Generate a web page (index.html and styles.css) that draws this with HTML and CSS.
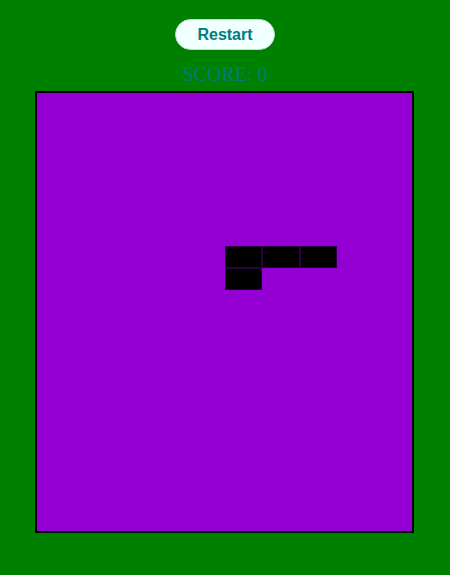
FILE: index.html
```html
<!DOCTYPE html>
<html>
<head>
<meta charset="utf-8">
<link rel="stylesheet" href="styles.css">
</head>
<body>
<div class="page">
  <button class="restart">Restart</button>
  <div class="score">SCORE: 0</div>
  <div class="board">
    <div class="cell c1"></div>
    <div class="cell c2"></div>
    <div class="cell c3"></div>
    <div class="cell c4"></div>
  </div>
</div>
</body>
</html>
```
FILE: styles.css
```css
html, body {
  margin: 0;
  padding: 0;
  background: #008000;
}
.page {
  width: 450px;
  height: 575px;
  display: flex;
  flex-direction: column;
  align-items: center;
}
.restart {
  margin-top: 19px;
  width: 100px;
  height: 31px;
  box-sizing: border-box;
  border: 1px solid #c8d8d8;
  border-radius: 16px;
  background: #f0ffff;
  color: #007b80;
  font-family: "Liberation Sans", Arial, sans-serif;
  font-weight: bold;
  font-size: 16px;
  padding: 0;
}
.score {
  margin-top: 13px;
  height: 28px;
  font-family: "Liberation Serif", "Times New Roman", serif;
  font-size: 20px;
  line-height: 23px;
  color: #007b80;
}
.board {
  width: 375px;
  height: 438px;
  margin-right: 1px;
  border: 2px solid #000;
  background: #9400d3;
  display: grid;
  grid-template-columns: repeat(10, 1fr);
  grid-template-rows: repeat(20, 1fr);
}
.cell {
  background: #000;
  box-sizing: border-box;
  border: 1px solid #2a0040;
}
.c1 { grid-column: 6; grid-row: 8; }
.c2 { grid-column: 7; grid-row: 8; }
.c3 { grid-column: 8; grid-row: 8; }
.c4 { grid-column: 6; grid-row: 9; }
```
